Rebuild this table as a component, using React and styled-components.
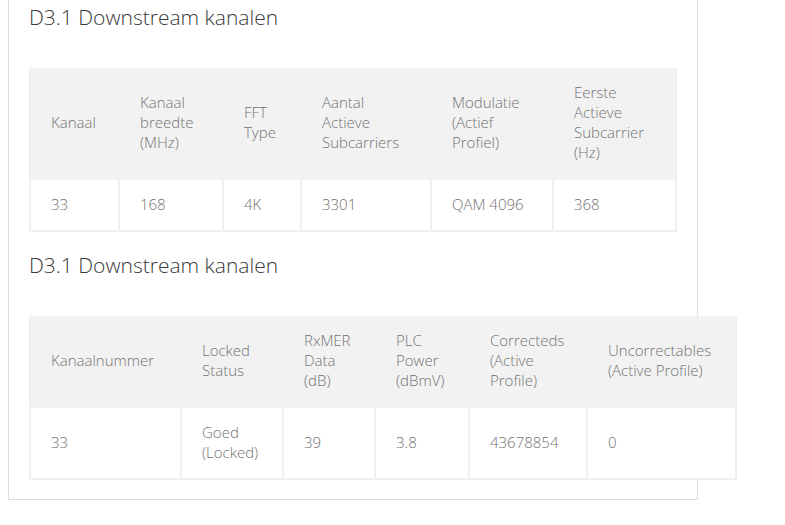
import styled, { createGlobalStyle } from "styled-components";

const GlobalStyle = createGlobalStyle`
  html, body {
    margin: 0;
    padding: 0;
    background: #fff;
  }

  body {
    font-family: "Open Sans", "Liberation Sans", sans-serif;
    font-weight: 300;
  }
`;

const Panel = styled.div`
  box-sizing: border-box;
  width: 690px;
  margin-left: 8px;
  padding: 5px 20px 19px;

  border: 1px solid #dddddd;
  border-top: none;

  display: flex;
  flex-direction: column;
  gap: 21px;
`;

const Section = styled.section`
  display: flex;
  flex-direction: column;
`;

const Heading = styled.h2`
  margin: 0 0 39px;

  color: #3a3a3a;
  font-size: 21px;
  font-weight: 300;
  line-height: 24px;
  white-space: nowrap;
`;

const Table = styled.table`
  width: ${(p) => p.$width}px;
  table-layout: fixed;

  border-collapse: separate;
  border-spacing: 2px;

  background: #f0f0f2;
  position: relative;

  th,
  td {
    padding: 14px 18px 16px 20px;

    color: #727272;
    font-size: 15px;
    font-weight: 300;
    line-height: 20px;
    text-align: left;
    vertical-align: middle;
  }

  th {
    padding-top: 12px;
    background: #f2f2f2;
  }

  td {
    background: #ffffff;
  }
`;

const tables = [
  {
    width: 648,
    cols: [87, 102, 76, 128, 120, 121],
    head: [
      ["Kanaal"],
      ["Kanaal", "breedte", "(MHz)"],
      ["FFT", "Type"],
      ["Aantal", "Actieve", "Subcarriers"],
      ["Modulatie", "(Actief", "Profiel)"],
      ["Eerste", "Actieve", "Subcarrier", "(Hz)"],
    ],
    row: [["33"], ["168"], ["4K"], ["3301"], ["QAM 4096"], ["368"]],
  },
  {
    width: 708,
    cols: [149, 100, 90, 92, 116, 147],
    head: [
      ["Kanaalnummer"],
      ["Locked", "Status"],
      ["RxMER", "Data", "(dB)"],
      ["PLC", "Power", "(dBmV)"],
      ["Correcteds", "(Active", "Profile)"],
      ["Uncorrectables", "(Active Profile)"],
    ],
    row: [["33"], ["Goed", "(Locked)"], ["39"], ["3.8"], ["43678854"], ["0"]],
  },
];

const Lines = ({ lines }) =>
  lines.map((line, i) => (
    <span key={i}>
      {i > 0 && <br />}
      {line}
    </span>
  ));

const App = () => {
  return (
    <>
      <GlobalStyle />
      <Panel>
        {tables.map((t, ti) => (
          <Section key={ti}>
            <Heading>D3.1 Downstream kanalen</Heading>
            <Table $width={t.width}>
              <colgroup>
                {t.cols.map((w, i) => (
                  <col key={i} style={{ width: w }} />
                ))}
              </colgroup>
              <thead>
                <tr>
                  {t.head.map((h, i) => (
                    <th key={i}>
                      <Lines lines={h} />
                    </th>
                  ))}
                </tr>
              </thead>
              <tbody>
                <tr>
                  {t.row.map((c, i) => (
                    <td key={i}>
                      <Lines lines={c} />
                    </td>
                  ))}
                </tr>
              </tbody>
            </Table>
          </Section>
        ))}
      </Panel>
    </>
  );
};

export default App;
